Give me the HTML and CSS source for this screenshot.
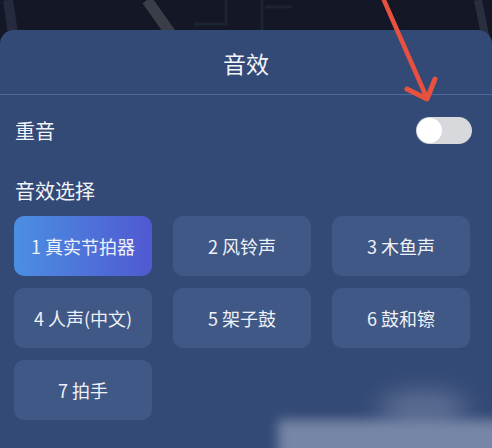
FILE: index.html
```html
<!DOCTYPE html>
<html lang="zh">
<head>
<meta charset="utf-8">
<link rel="stylesheet" href="styles.css">
</head>
<body>
<div class="screen">
  <svg class="backdrop" width="492" height="448" viewBox="0 0 492 448">
    <rect x="0" y="0" width="492" height="40" fill="#141826"/>
    <path d="M8 0 L14 40" stroke="#252a3c" stroke-width="10"/>
    <path d="M478 0 L486 40" stroke="#2a2f40" stroke-width="8"/>
    <path d="M147 0 L171 34" stroke="#3b3e48" stroke-width="11"/>
    <path d="M194 24 L226 24 M226 0 L226 26" stroke="#1d2234" stroke-width="3"/>
    <path d="M262 0 L262 30 M265 7 L292 7" stroke="#1d2234" stroke-width="3"/>
  </svg>
  <div class="panel">
    <div class="header">音效</div>
    <div class="row">
      <span class="label">重音</span>
      <span class="toggle"><span class="knob"></span></span>
    </div>
    <div class="section">音效选择</div>
    <div class="grid">
      <div class="opt active">1 真实节拍器</div>
      <div class="opt">2 风铃声</div>
      <div class="opt">3 木鱼声</div>
      <div class="opt">4 人声(中文)</div>
      <div class="opt">5 架子鼓</div>
      <div class="opt">6 鼓和镲</div>
      <div class="opt">7 拍手</div>
    </div>
  </div>
  <div class="watermark"></div>
  <div class="blob"></div>
  <svg class="arrow" width="492" height="448" viewBox="0 0 492 448">
    <path d="M383 -2 L426 96" stroke="#e8513f" stroke-width="4.5" stroke-linecap="round" fill="none"/>
    <path d="M407 89 L427 99 L435 79" stroke="#e8513f" stroke-width="5" stroke-linecap="round" stroke-linejoin="round" fill="none"/>
  </svg>
</div>
</body>
</html>
```
FILE: styles.css
```css
* { box-sizing: border-box; }
html, body {
  margin: 0;
  padding: 0;
  background: #141826;
  font-family: "Noto Sans CJK SC", "Noto Sans", sans-serif;
}
.screen {
  position: relative;
  width: 492px;
  height: 448px;
  overflow: hidden;
  padding-top: 30px;
}
.backdrop {
  position: absolute;
  left: 0;
  top: 0;
}
.panel {
  position: relative;
  height: 418px;
  background: #344a76;
  border-radius: 14px 14px 0 0;
  color: #f2f4f9;
}
.header {
  height: 65px;
  border-bottom: 1px solid #4f679a;
  display: flex;
  align-items: center;
  justify-content: center;
  font-size: 23px;
  padding-top: 2px;
}
.row {
  display: flex;
  align-items: center;
  justify-content: space-between;
  margin-top: 22px;
  padding: 0 20px 0 15px;
}
.label {
  font-size: 20px;
  line-height: 26px;
}
.toggle {
  width: 56px;
  height: 27px;
  border-radius: 14px;
  background: #d8d9dd;
  display: flex;
  align-items: center;
  padding-left: 1px;
}
.knob {
  width: 25px;
  height: 25px;
  border-radius: 50%;
  background: #ffffff;
}
.section {
  margin-top: 34px;
  padding-left: 15px;
  font-size: 20px;
  line-height: 26px;
}
.grid {
  margin-top: 12px;
  padding-left: 14px;
  display: grid;
  grid-template-columns: repeat(3, 138px);
  grid-auto-rows: 60px;
  column-gap: 21px;
  row-gap: 12px;
}
.opt {
  background: #405885;
  border-radius: 10px;
  display: flex;
  align-items: center;
  justify-content: center;
  font-size: 18px;
  color: #eef1f7;
}
.opt.active {
  background: linear-gradient(90deg, #4b8fe2 0%, #5059d1 100%);
}
.watermark {
  position: absolute;
  left: 278px;
  top: 420px;
  width: 240px;
  height: 40px;
  background: #8d9ab8;
  filter: blur(6px);
  opacity: 0.75;
}
.blob {
  position: absolute;
  left: 378px;
  top: 392px;
  width: 90px;
  height: 34px;
  border-radius: 50%;
  background: #7d8bab;
  filter: blur(12px);
  opacity: 0.6;
}
.arrow {
  position: absolute;
  left: 0;
  top: 0;
}
```
